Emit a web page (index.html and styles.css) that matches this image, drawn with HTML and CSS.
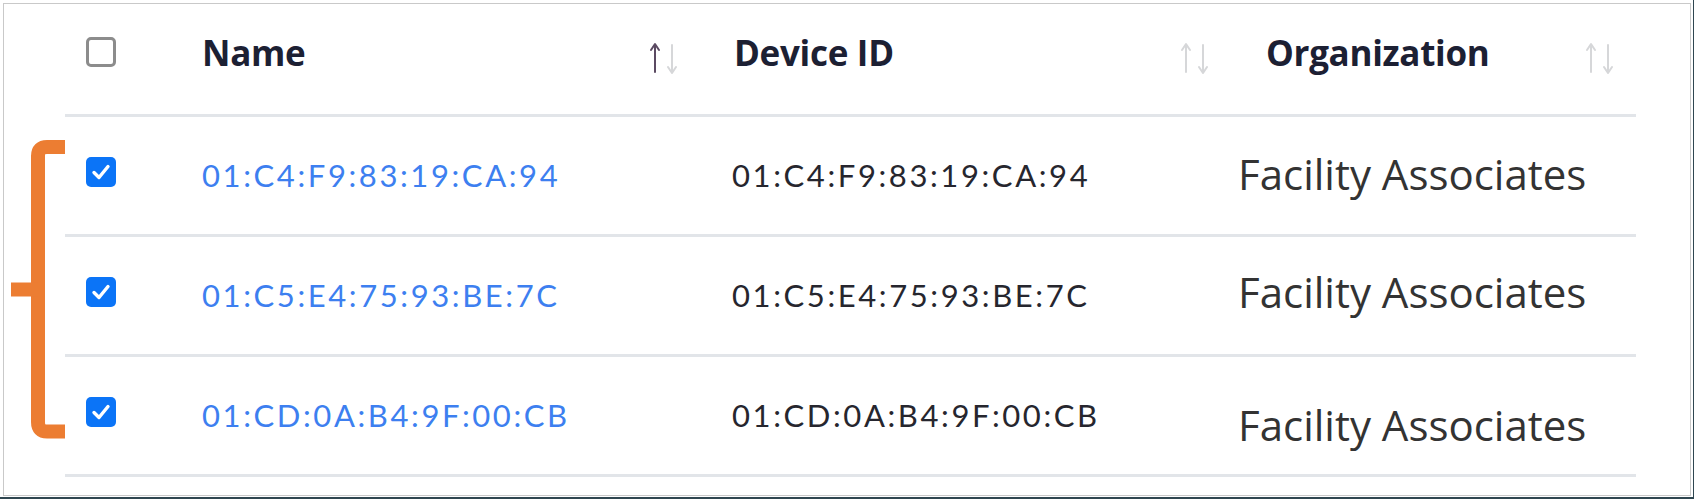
FILE: index.html
```html
<!DOCTYPE html>
<html lang="en">
<head>
<meta charset="utf-8">
<title>Devices</title>
<link rel="stylesheet" href="styles.css">
</head>
<body>
<div class="page">
  <div class="frame">
    <div class="table">
      <div class="row head">
        <div class="cell c-check"><span class="cb"></span></div>
        <div class="cell c-name">
          <span class="th">Name</span>
          <svg class="sort" width="34" height="32" viewBox="0 0 34 32"><path class="up active" d="M7 3 V30 M3 8 L7 2 L11 8"/><path class="down" d="M24 3 V30 M20 25 L24 31 L28 25"/></svg>
        </div>
        <div class="cell c-dev">
          <span class="th">Device ID</span>
          <svg class="sort" width="34" height="32" viewBox="0 0 34 32"><path class="up" d="M7 3 V30 M3 8 L7 2 L11 8"/><path class="down" d="M24 3 V30 M20 25 L24 31 L28 25"/></svg>
        </div>
        <div class="cell c-org">
          <span class="th">Organization</span>
          <svg class="sort" width="34" height="32" viewBox="0 0 34 32"><path class="up" d="M7 3 V30 M3 8 L7 2 L11 8"/><path class="down" d="M24 3 V30 M20 25 L24 31 L28 25"/></svg>
        </div>
      </div>

      <div class="row body">
        <div class="cell c-check"><span class="cb checked"><svg width="30" height="30" viewBox="0 0 30 30"><path d="M8 15.5 L13 20.5 L22 9.5"/></svg></span></div>
        <div class="cell c-name"><a class="link" href="#">01:C4:F9:83:19:CA:94</a></div>
        <div class="cell c-dev"><span class="dev">01:C4:F9:83:19:CA:94</span></div>
        <div class="cell c-org"><span class="org r1">Facility Associates</span></div>
      </div>

      <div class="row body">
        <div class="cell c-check"><span class="cb checked"><svg width="30" height="30" viewBox="0 0 30 30"><path d="M8 15.5 L13 20.5 L22 9.5"/></svg></span></div>
        <div class="cell c-name"><a class="link" href="#">01:C5:E4:75:93:BE:7C</a></div>
        <div class="cell c-dev"><span class="dev">01:C5:E4:75:93:BE:7C</span></div>
        <div class="cell c-org"><span class="org r2">Facility Associates</span></div>
      </div>

      <div class="row body">
        <div class="cell c-check"><span class="cb checked"><svg width="30" height="30" viewBox="0 0 30 30"><path d="M8 15.5 L13 20.5 L22 9.5"/></svg></span></div>
        <div class="cell c-name"><a class="link" href="#">01:CD:0A:B4:9F:00:CB</a></div>
        <div class="cell c-dev"><span class="dev">01:CD:0A:B4:9F:00:CB</span></div>
        <div class="cell c-org"><span class="org r3">Facility Associates</span></div>
      </div>
    </div>
  </div>

  <svg class="bracket" width="70" height="499" viewBox="0 0 70 499">
    <path d="M65 147 H47 Q38 147 38 156 V422 Q38 431.5 47 431.5 H65"/>
    <path d="M11 289.5 H38"/>
  </svg>
</div>
</body>
</html>
```

FILE: styles.css
```css
html, body {
  margin: 0;
  padding: 0;
  background: #ffffff;
}

.page {
  position: relative;
  width: 1694px;
  height: 499px;
  box-sizing: border-box;
  padding: 3px 0 0 3px;
  border-right: 1px solid #2f4650;
  border-bottom: 2px solid #2f4650;
  background: #ffffff;
}

.frame {
  width: 1688px;
  height: 493px;
  box-sizing: border-box;
  border: 1px solid #c9c9c9;
  padding-left: 61px;
}

.table {
  width: 1571px;
}

.row {
  display: grid;
  grid-template-columns: 121px 532px 532px 386px;
  border-bottom: 3px solid #e2e5e9;
}

.row.head {
  height: 110px;
}

.row.body {
  height: 117px;
}

.cell {
  display: flex;
  align-items: center;
  min-width: 0;
}

.head .cell {
  padding-bottom: 14px;
  box-sizing: border-box;
}

.c-check {
  padding-left: 21px;
}

.c-name,
.c-dev,
.c-org {
  padding-left: 16px;
  justify-content: space-between;
}

.head .c-name { padding-right: 36px; }
.head .c-dev { padding-right: 37px; }
.head .c-org { padding-right: 18px; }

.th {
  font-family: "Open Sans", "Liberation Sans", sans-serif;
  font-weight: 700;
  font-size: 35px;
  line-height: 1;
  color: #1c2033;
  letter-spacing: -0.3px;
}

.sort {
  margin-top: 11px;
  flex: none;
}

.sort path {
  fill: none;
  stroke: #d6d7d9;
  stroke-width: 2;
  stroke-linecap: round;
  stroke-linejoin: round;
}

.sort path.active {
  stroke: #5b4a62;
}

.cb {
  display: block;
  width: 30px;
  height: 30px;
  box-sizing: border-box;
  border: 3px solid #8c8c8c;
  border-radius: 5px;
  background: #ffffff;
}

.body .cb {
  margin-bottom: 8px;
}

.cb.checked {
  border: none;
  background: #0b74f7;
}

.cb.checked svg {
  display: block;
}

.cb.checked path {
  fill: none;
  stroke: #ffffff;
  stroke-width: 3.4;
  stroke-linecap: round;
  stroke-linejoin: round;
}

.link,
.dev {
  font-family: "Lato", "Liberation Sans", sans-serif;
  font-weight: 400;
  font-size: 31px;
  line-height: 1;
  letter-spacing: 2.6px;
  text-decoration: none;
  white-space: nowrap;
}

.link {
  color: #3d7ff0;
}

.dev {
  margin-left: -2px;
  color: #26262e;
}

.org {
  margin-left: -28px;
  font-family: "Open Sans", "Liberation Sans", sans-serif;
  font-weight: 400;
  font-size: 42px;
  line-height: 1;
  color: #333333;
  white-space: nowrap;
}

.org.r1 {
  margin-top: -4px;
}

.org.r2 {
  margin-top: -8px;
}

.org.r3 {
  margin-top: 18px;
}

.bracket {
  position: absolute;
  left: 0;
  top: 0;
}

.bracket path {
  fill: none;
  stroke: #ec7d32;
  stroke-width: 14;
  stroke-linecap: butt;
  stroke-linejoin: round;
}
```
